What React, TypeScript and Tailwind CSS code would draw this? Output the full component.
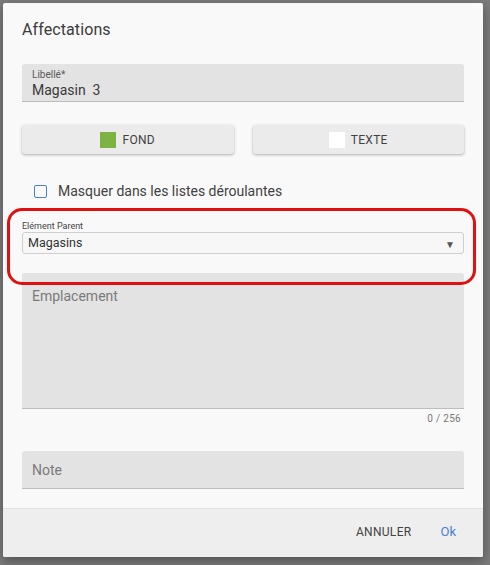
import { useState } from "react";

const font = { fontFamily: "Roboto, 'Noto Sans', sans-serif" };

export default function App() {
  const [hidden, setHidden] = useState(false);
  const [parent, setParent] = useState("Magasins");
  const [emplacement, setEmplacement] = useState("");

  return (
    <div className="w-[490px] h-[565px] bg-[#7b7b7b] pt-[3px] pl-[3px] overflow-hidden" style={font}>
      <div className="relative w-[480px] h-[554px] bg-[#f9f9f9] rounded-[2px] shadow-[0_4px_12px_rgba(0,0,0,0.35)] flex flex-col overflow-hidden">
        <div className="flex-1 px-[19px]">
          <h2 className="text-[16px] text-[#3c3c3c] pt-[17px] leading-[20px] tracking-[0.1px]">Affectations</h2>

          {/* Libellé */}
          <div className="mt-[24px] h-[38px] bg-[#e3e3e3] rounded-t-[3px] border-b border-[#bdbdbd] px-[10px] pt-[5px]">
            <div className="text-[10px] leading-[12px] text-[#5a5a5a]">Libellé*</div>
            <div className="text-[14px] leading-[18px] text-[#3a3a3a] whitespace-pre">Magasin  3</div>
          </div>

          {/* Couleurs */}
          <div className="mt-[23px] grid grid-cols-2 gap-[19px]">
            <button className="h-[29px] bg-[#ebebeb] rounded-[3px] shadow-[0_1px_3px_rgba(0,0,0,0.3)] flex items-center justify-center gap-[6px] text-[12px] text-[#424242] tracking-[0.3px]">
              <span className="w-[16px] h-[16px] bg-[#7cb342]" />
              FOND
            </button>
            <button className="h-[29px] bg-[#ebebeb] rounded-[3px] shadow-[0_1px_3px_rgba(0,0,0,0.3)] flex items-center justify-center gap-[6px] text-[12px] text-[#424242] tracking-[0.3px]">
              <span className="w-[16px] h-[16px] bg-white" />
              TEXTE
            </button>
          </div>

          {/* Checkbox */}
          <label className="mt-[29px] ml-[12px] flex items-center gap-[11px] cursor-pointer">
            <span
              onClick={() => setHidden(!hidden)}
              className={`w-[13px] h-[13px] rounded-[2px] border-[1.5px] border-[#4a7fd4] ${hidden ? "bg-[#4a7fd4]" : "bg-transparent"}`}
            />
            <span className="text-[14px] leading-[16px] text-[#424242]">Masquer dans les listes déroulantes</span>
          </label>

          {/* Elément Parent */}
          <div className="mt-[22px] text-[9px] leading-[11px] text-[#444]">Elément Parent</div>
          <div className="relative h-[22px] border border-[#cfcfcf] rounded-[3px] bg-[#f7f7f7] flex items-center px-[5px]">
            <select
              value={parent}
              onChange={(e) => setParent(e.target.value)}
              className="appearance-none bg-transparent w-full text-[12.5px] text-[#333] outline-none"
            >
              <option>Magasins</option>
            </select>
            <span className="absolute right-[8px] top-[4px] text-[10px] text-[#555]">▼</span>
          </div>

          {/* Emplacement */}
          <div className="mt-[19px] h-[136px] bg-[#e3e3e3] rounded-t-[3px] border-b border-[#bdbdbd] px-[10px] pt-[14px]">
            <textarea
              value={emplacement}
              onChange={(e) => setEmplacement(e.target.value)}
              placeholder="Emplacement"
              className="w-full h-full resize-none bg-transparent outline-none text-[14px] leading-[18px] text-[#333] placeholder:text-[#7a7a7a]"
            />
          </div>
          <div className="mt-[4px] pr-[3px] text-right text-[10px] leading-[12px] text-[#777] tracking-[0.3px]">0 / 256</div>

          {/* Note */}
          <div className="mt-[26px] h-[38px] bg-[#e3e3e3] rounded-t-[3px] border-b border-[#bdbdbd] px-[10px] flex items-center">
            <input
              placeholder="Note"
              className="w-full bg-transparent outline-none text-[14px] text-[#333] placeholder:text-[#7a7a7a] pt-[1px]"
            />
          </div>
        </div>

        {/* Footer */}
        <div className="h-[49px] bg-[#eeeeee] border-t border-[#e2e2e2] flex items-center justify-end gap-[29px] pr-[27px] pb-[3px]">
          <button className="text-[12px] text-[#424242] tracking-[0.3px]">ANNULER</button>
          <button className="text-[13px] text-[#4a7fd4]">Ok</button>
        </div>

        {/* annotation */}
        <div className="absolute left-[4px] top-[205px] w-[469px] h-[77px] border-[3px] border-[#e01010] rounded-[15px] pointer-events-none" />
      </div>
    </div>
  );
}
